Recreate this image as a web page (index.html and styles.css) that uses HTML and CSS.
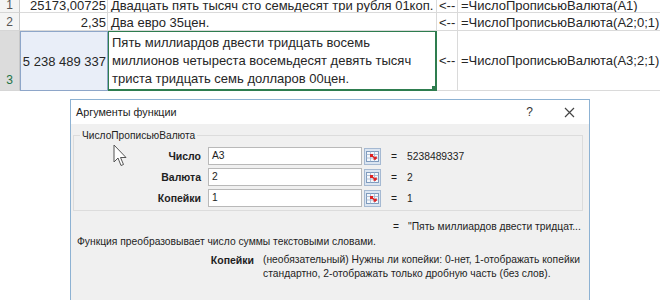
FILE: index.html
```html
<!DOCTYPE html>
<html lang="ru">
<head>
<meta charset="utf-8">
<link rel="stylesheet" href="styles.css">
</head>
<body>
<div class="sheet">
  <div class="hdr h1">1</div>
  <div class="cell num r1">25173,00725</div>
  <div class="cell txt r1">Двадцать пять тысяч сто семьдесят три рубля 01коп.</div>
  <div class="cell arr r1">&lt;--</div>
  <div class="cell fx r1">=ЧислоПрописьюВалюта(A1)</div>

  <div class="hdr h2">2</div>
  <div class="cell num r2">2,35</div>
  <div class="cell txt r2">Два евро 35цен.</div>
  <div class="cell arr r2">&lt;--</div>
  <div class="cell fx r2">=ЧислоПрописьюВалюта(A2;0;1)</div>

  <div class="hdr h3">3</div>
  <div class="cell num r3 sel">5 238 489 337</div>
  <div class="cell txt r3 act">Пять миллиардов двести тридцать восемь<br>миллионов четыреста восемьдесят девять тысяч<br>триста тридцать семь долларов 00цен.</div>
  <div class="cell arr r3">&lt;--</div>
  <div class="cell fx r3">=ЧислоПрописьюВалюта(A3;2;1)</div>
</div>

<div class="dialog">
  <div class="titlebar">
    <span class="title">Аргументы функции</span>
    <span class="help">?</span>
    <svg class="close" width="11" height="11" viewBox="0 0 11 11"><path d="M1 1L10 10M10 1L1 10" stroke="#444" stroke-width="1.2"/></svg>
  </div>
  <div class="dbody">
    <div class="group">
      <div class="legend">ЧислоПрописьюВалюта</div>
      <div class="args">
        <div class="lbl">Число</div>
        <div class="inp">A3</div>
        <div class="pick"><svg width="15" height="15" viewBox="0 0 15 15"><rect x="1.5" y="2.5" width="12" height="10" fill="#f4f7fb" stroke="#7f9bbd"/><path d="M1.5 5.5H13.5M5.5 2.5V12.5M9.5 2.5V12.5M1.5 9H13.5" stroke="#9fb4cf" stroke-width="0.8"/><path d="M6 6L11 10M11 10V7.5M11 10H8.5" stroke="#d22" stroke-width="1.6" fill="none"/><rect x="5" y="5" width="3" height="3" fill="#d22"/></svg></div>
        <div class="eq">=</div>
        <div class="val">5238489337</div>

        <div class="lbl">Валюта</div>
        <div class="inp">2</div>
        <div class="pick"><svg width="15" height="15" viewBox="0 0 15 15"><rect x="1.5" y="2.5" width="12" height="10" fill="#f4f7fb" stroke="#7f9bbd"/><path d="M1.5 5.5H13.5M5.5 2.5V12.5M9.5 2.5V12.5M1.5 9H13.5" stroke="#9fb4cf" stroke-width="0.8"/><path d="M6 6L11 10M11 10V7.5M11 10H8.5" stroke="#d22" stroke-width="1.6" fill="none"/><rect x="5" y="5" width="3" height="3" fill="#d22"/></svg></div>
        <div class="eq">=</div>
        <div class="val">2</div>

        <div class="lbl">Копейки</div>
        <div class="inp">1</div>
        <div class="pick"><svg width="15" height="15" viewBox="0 0 15 15"><rect x="1.5" y="2.5" width="12" height="10" fill="#f4f7fb" stroke="#7f9bbd"/><path d="M1.5 5.5H13.5M5.5 2.5V12.5M9.5 2.5V12.5M1.5 9H13.5" stroke="#9fb4cf" stroke-width="0.8"/><path d="M6 6L11 10M11 10V7.5M11 10H8.5" stroke="#d22" stroke-width="1.6" fill="none"/><rect x="5" y="5" width="3" height="3" fill="#d22"/></svg></div>
        <div class="eq">=</div>
        <div class="val">1</div>
      </div>
    </div>
    <div class="result"><span class="eq2">=</span><span>"Пять миллиардов двести тридцат...</span></div>
    <div class="desc">Функция преобразовывает число суммы текстовыми словами.</div>
    <div class="argdesc">
      <div class="adname">Копейки</div>
      <div class="adtext">(необязательный) Нужны ли копейки: 0-нет, 1-отображать копейки<br>стандартно, 2-отображать только дробную часть (без слов).</div>
    </div>
    <div class="sep"></div>
  </div>
  <svg class="cursor" width="14" height="23" viewBox="0 0 14 23"><path d="M1 1V18L5 14L8 21.5L10.5 20.5L7.5 13.5H13Z" fill="#fff" stroke="#555" stroke-width="1" stroke-linejoin="round"/></svg>
</div>
</body>
</html>
```
FILE: styles.css
```css
html, body {
  margin: 0;
  padding: 0;
  background: #fff;
  width: 660px;
  height: 300px;
  overflow: hidden;
}
body {
  font-family: "Liberation Sans", Arial, sans-serif;
  color: #222;
  position: relative;
}
.sheet {
  display: grid;
  grid-template-columns: 20px 88px 329px 21px 1fr;
  grid-template-rows: 13px 18px 60px;
  font-size: 13px;
  color: #262626;
}
.hdr {
  background: #f4f4f4;
  color: #555;
  font-size: 12px;
  display: flex;
  align-items: flex-end;
  justify-content: center;
  border-right: 1px solid #c8c8c8;
  border-bottom: 1px solid #d6d6d6;
  line-height: 15px;
  overflow: hidden;
}
.hdr.h1 { line-height: 13px; }
.hdr.h3 {
  background: #dcdcdc;
  color: #217346;
  padding-bottom: 3px;
  line-height: 14px;
}
.cell {
  display: flex;
  align-items: flex-end;
  border-right: 1px solid #dadada;
  border-bottom: 1px solid #dadada;
  line-height: 15px;
  white-space: nowrap;
  overflow: hidden;
  padding: 0 3px;
}
.cell.r1 { line-height: 13px; }
.cell.r3 { align-items: center; }
.num { justify-content: flex-end; padding-right: 1px; }
.arr { padding: 0 2px; }
.fx { border-right: none; }
.txt.r3 { line-height: 18px; }
.sel {
  background: #e9eef8;
  border: 1px solid #8ea6c9;
}
.act {
  border: 2px solid #2e7d4f;
  border-top-width: 1px;
  border-left-width: 1px;
  position: relative;
}
.act::after {
  content: "";
  position: absolute;
  right: -3px;
  bottom: -3px;
  width: 5px;
  height: 5px;
  background: #2e7d4f;
  border: 1px solid #fff;
}
.dialog {
  position: relative;
  margin: 8px 0 0 70px;
  width: 518px;
  height: 260px;
  border: 1px solid #8db2d3;
  border-bottom: none;
  background: #f0f0f0;
}
.titlebar {
  height: 24px;
  background: #fff;
  display: flex;
  align-items: center;
  font-size: 10.8px;
  color: #222;
}
.title { padding-left: 5px; flex: 1; }
.help { margin-right: 31px; font-size: 12px; color: #333; }
.close { margin-right: 14px; }
.dbody {
  padding: 0 6px 0 2px;
  font-size: 10.3px;
  color: #1e1e1e;
}
.group {
  margin-top: 11px;
  border: 1px solid #dcdcdc;
  padding-bottom: 3px;
}
.legend {
  margin: -7px 0 0 6px;
  width: fit-content;
  padding: 0 2px;
  background: #f0f0f0;
  line-height: 14px;
  font-size: 10.2px;
}
.args {
  margin-top: 4px;
  display: grid;
  grid-template-columns: 134px 154px 19px 17px 1fr;
  grid-auto-rows: 18px;
  row-gap: 3px;
  align-items: center;
}
.lbl {
  font-weight: bold;
  text-align: right;
  padding-right: 7px;
  font-size: 10.5px;
}
.inp {
  height: 18px;
  box-sizing: border-box;
  background: #fff;
  border: 1px solid #b9b9b9;
  line-height: 16px;
  padding-left: 3px;
}
.pick {
  width: 17px;
  height: 17px;
  box-sizing: border-box;
  margin-left: 2px;
  background: #dbe5f1;
  border: 1px solid #a5b9d2;
  display: flex;
  align-items: center;
  justify-content: center;
}
.eq { text-align: right; padding-right: 1px; }
.val { padding-left: 9px; }
.result {
  margin-top: 8px;
  line-height: 15px;
  padding-left: 320px;
  display: flex;
  gap: 9px;
  white-space: nowrap;
}
.desc {
  line-height: 15px;
  padding-left: 4px;
}
.argdesc {
  margin-top: 4px;
  display: flex;
  line-height: 14px;
  white-space: nowrap;
}
.adname {
  flex: 0 0 auto;
  width: 181px;
  text-align: right;
  font-weight: bold;
  font-size: 10.5px;
  padding-right: 9px;
}
.sep {
  margin-top: 19px;
  border-top: 1px solid #e2e2e2;
}
.cursor {
  position: absolute;
  left: 42px;
  top: 44px;
}
```
